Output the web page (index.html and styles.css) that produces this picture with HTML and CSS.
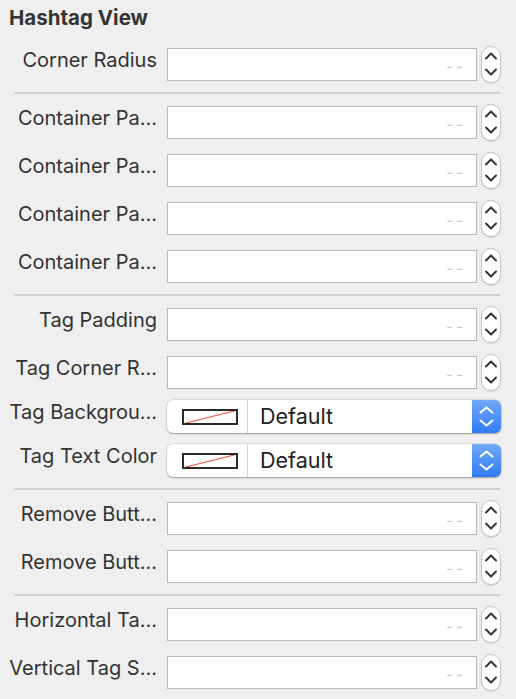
FILE: index.html
```html
<!DOCTYPE html>
<html lang="en">
<head>
<meta charset="utf-8">
<title>Hashtag View</title>
<link rel="stylesheet" href="styles.css">
</head>
<body>
<div class="panel">
  <div class="header"><h1 class="title">Hashtag View</h1></div>

  <section class="group">
    <div class="row">
      <span class="label">Corner Radius</span>
      <div class="field"><span class="placeholder">--</span></div>
      <div class="stepper"><svg width="18" height="35" viewBox="0 0 18 35"><path d="M4 11.5 L9 6.5 L14 11.5" /><path d="M4 22.5 L9 27.5 L14 22.5" /></svg></div>
    </div>
  </section>
  <div class="divider"></div>

  <section class="group">
    <div class="row">
      <span class="label">Container Pa…</span>
      <div class="field"><span class="placeholder">--</span></div>
      <div class="stepper"><svg width="18" height="35" viewBox="0 0 18 35"><path d="M4 11.5 L9 6.5 L14 11.5" /><path d="M4 22.5 L9 27.5 L14 22.5" /></svg></div>
    </div>
    <div class="row">
      <span class="label">Container Pa…</span>
      <div class="field"><span class="placeholder">--</span></div>
      <div class="stepper"><svg width="18" height="35" viewBox="0 0 18 35"><path d="M4 11.5 L9 6.5 L14 11.5" /><path d="M4 22.5 L9 27.5 L14 22.5" /></svg></div>
    </div>
    <div class="row">
      <span class="label">Container Pa…</span>
      <div class="field"><span class="placeholder">--</span></div>
      <div class="stepper"><svg width="18" height="35" viewBox="0 0 18 35"><path d="M4 11.5 L9 6.5 L14 11.5" /><path d="M4 22.5 L9 27.5 L14 22.5" /></svg></div>
    </div>
    <div class="row">
      <span class="label">Container Pa…</span>
      <div class="field"><span class="placeholder">--</span></div>
      <div class="stepper"><svg width="18" height="35" viewBox="0 0 18 35"><path d="M4 11.5 L9 6.5 L14 11.5" /><path d="M4 22.5 L9 27.5 L14 22.5" /></svg></div>
    </div>
  </section>
  <div class="divider"></div>

  <section class="group">
    <div class="row">
      <span class="label">Tag Padding</span>
      <div class="field"><span class="placeholder">--</span></div>
      <div class="stepper"><svg width="18" height="35" viewBox="0 0 18 35"><path d="M4 11.5 L9 6.5 L14 11.5" /><path d="M4 22.5 L9 27.5 L14 22.5" /></svg></div>
    </div>
    <div class="row">
      <span class="label">Tag Corner R…</span>
      <div class="field"><span class="placeholder">--</span></div>
      <div class="stepper"><svg width="18" height="35" viewBox="0 0 18 35"><path d="M4 11.5 L9 6.5 L14 11.5" /><path d="M4 22.5 L9 27.5 L14 22.5" /></svg></div>
    </div>
    <div class="row row-picker">
      <span class="label">Tag Backgrou…</span>
      <div class="picker">
        <div class="swatch-cell"><svg class="swatch" width="56" height="16" viewBox="0 0 56 16"><line x1="2" y1="14.5" x2="54" y2="1.5" stroke="#f2453d" stroke-width="1"/><rect x="1" y="1" width="54" height="14" fill="none" stroke="#2a2a2a" stroke-width="2"/></svg></div>
        <div class="picker-text">Default</div>
        <div class="picker-btn"><svg width="29" height="33" viewBox="0 0 29 33"><path d="M8.5 12.5 L14.5 7.5 L20.5 12.5" /><path d="M8.5 20.5 L14.5 25.5 L20.5 20.5" /></svg></div>
      </div>
    </div>
    <div class="row row-picker">
      <span class="label">Tag Text Color</span>
      <div class="picker">
        <div class="swatch-cell"><svg class="swatch" width="56" height="16" viewBox="0 0 56 16"><line x1="2" y1="14.5" x2="54" y2="1.5" stroke="#f2453d" stroke-width="1"/><rect x="1" y="1" width="54" height="14" fill="none" stroke="#2a2a2a" stroke-width="2"/></svg></div>
        <div class="picker-text">Default</div>
        <div class="picker-btn"><svg width="29" height="33" viewBox="0 0 29 33"><path d="M8.5 12.5 L14.5 7.5 L20.5 12.5" /><path d="M8.5 20.5 L14.5 25.5 L20.5 20.5" /></svg></div>
      </div>
    </div>
  </section>
  <div class="divider"></div>

  <section class="group">
    <div class="row">
      <span class="label">Remove Butt…</span>
      <div class="field"><span class="placeholder">--</span></div>
      <div class="stepper"><svg width="18" height="35" viewBox="0 0 18 35"><path d="M4 11.5 L9 6.5 L14 11.5" /><path d="M4 22.5 L9 27.5 L14 22.5" /></svg></div>
    </div>
    <div class="row">
      <span class="label">Remove Butt…</span>
      <div class="field"><span class="placeholder">--</span></div>
      <div class="stepper"><svg width="18" height="35" viewBox="0 0 18 35"><path d="M4 11.5 L9 6.5 L14 11.5" /><path d="M4 22.5 L9 27.5 L14 22.5" /></svg></div>
    </div>
  </section>
  <div class="divider"></div>

  <section class="group">
    <div class="row">
      <span class="label">Horizontal Ta…</span>
      <div class="field"><span class="placeholder">--</span></div>
      <div class="stepper"><svg width="18" height="35" viewBox="0 0 18 35"><path d="M4 11.5 L9 6.5 L14 11.5" /><path d="M4 22.5 L9 27.5 L14 22.5" /></svg></div>
    </div>
    <div class="row">
      <span class="label">Vertical Tag S…</span>
      <div class="field"><span class="placeholder">--</span></div>
      <div class="stepper"><svg width="18" height="35" viewBox="0 0 18 35"><path d="M4 11.5 L9 6.5 L14 11.5" /><path d="M4 22.5 L9 27.5 L14 22.5" /></svg></div>
    </div>
  </section>
</div>
</body>
</html>
```

FILE: styles.css
```css
html, body {
  margin: 0;
  padding: 0;
}

body {
  width: 516px;
  height: 699px;
  overflow: hidden;
  background: #efefef;
  font-family: Inter, "Noto Sans", "Liberation Sans", sans-serif;
  color: #333333;
}

.header {
  height: 36px;
  padding-left: 9px;
}

.title {
  margin: 0;
  font-size: 20.5px;
  font-weight: 700;
  line-height: 36px;
  color: #353535;
}

.group {
  display: flex;
  flex-direction: column;
  gap: 15px;
  padding: 12px 0 11px 8px;
}

.row {
  display: flex;
  align-items: center;
  height: 33px;
}

.row-picker {
  margin-top: -4px;
}

.label {
  flex: 0 0 149px;
  margin-right: 10px;
  align-self: flex-start;
  line-height: 24px;
  text-align: right;
  white-space: nowrap;
  font-size: 20px;
  color: #333333;
}

.field {
  flex: 0 0 310px;
  height: 33px;
  box-sizing: border-box;
  background: #ffffff;
  border: 1px solid #b9b9b9;
  display: flex;
  align-items: center;
  justify-content: flex-end;
  padding: 3px 10px 0 0;
}

.placeholder {
  color: #c9c9c9;
  font-size: 15px;
  letter-spacing: 3px;
}

.stepper {
  flex: 0 0 20px;
  height: 37px;
  margin-left: 4px;
  box-sizing: border-box;
  background: #ffffff;
  border: 1px solid #c6c6c6;
  border-radius: 10px;
  box-shadow: 0 1px 1px rgba(0, 0, 0, 0.12);
}

.stepper svg {
  display: block;
}

.stepper path {
  fill: none;
  stroke: #333333;
  stroke-width: 2;
  stroke-linecap: round;
  stroke-linejoin: round;
}

.picker {
  flex: 0 0 334px;
  height: 33px;
  display: flex;
  background: #ffffff;
  border-radius: 6px;
  box-shadow: 0 0 0 0.5px rgba(0, 0, 0, 0.15), 0 1px 1.5px rgba(0, 0, 0, 0.3);
  overflow: hidden;
}

.swatch-cell {
  flex: 0 0 81px;
  display: flex;
  align-items: center;
  padding-left: 15px;
  box-sizing: border-box;
  border-right: 1px solid #d2d2d2;
}

.swatch {
  display: block;
}

.picker-text {
  flex: 1;
  padding-left: 12px;
  font-size: 21.5px;
  line-height: 33px;
  color: #222222;
}

.picker-btn {
  flex: 0 0 29px;
  background: linear-gradient(#72a8f8, #2f7cf6);
}

.picker-btn svg {
  display: block;
}

.picker-btn path {
  fill: none;
  stroke: #ffffff;
  stroke-width: 2;
  stroke-linecap: round;
  stroke-linejoin: round;
}

.divider {
  height: 2px;
  margin: 0 16px 0 14px;
  background: #d1d1d1;
}
```
